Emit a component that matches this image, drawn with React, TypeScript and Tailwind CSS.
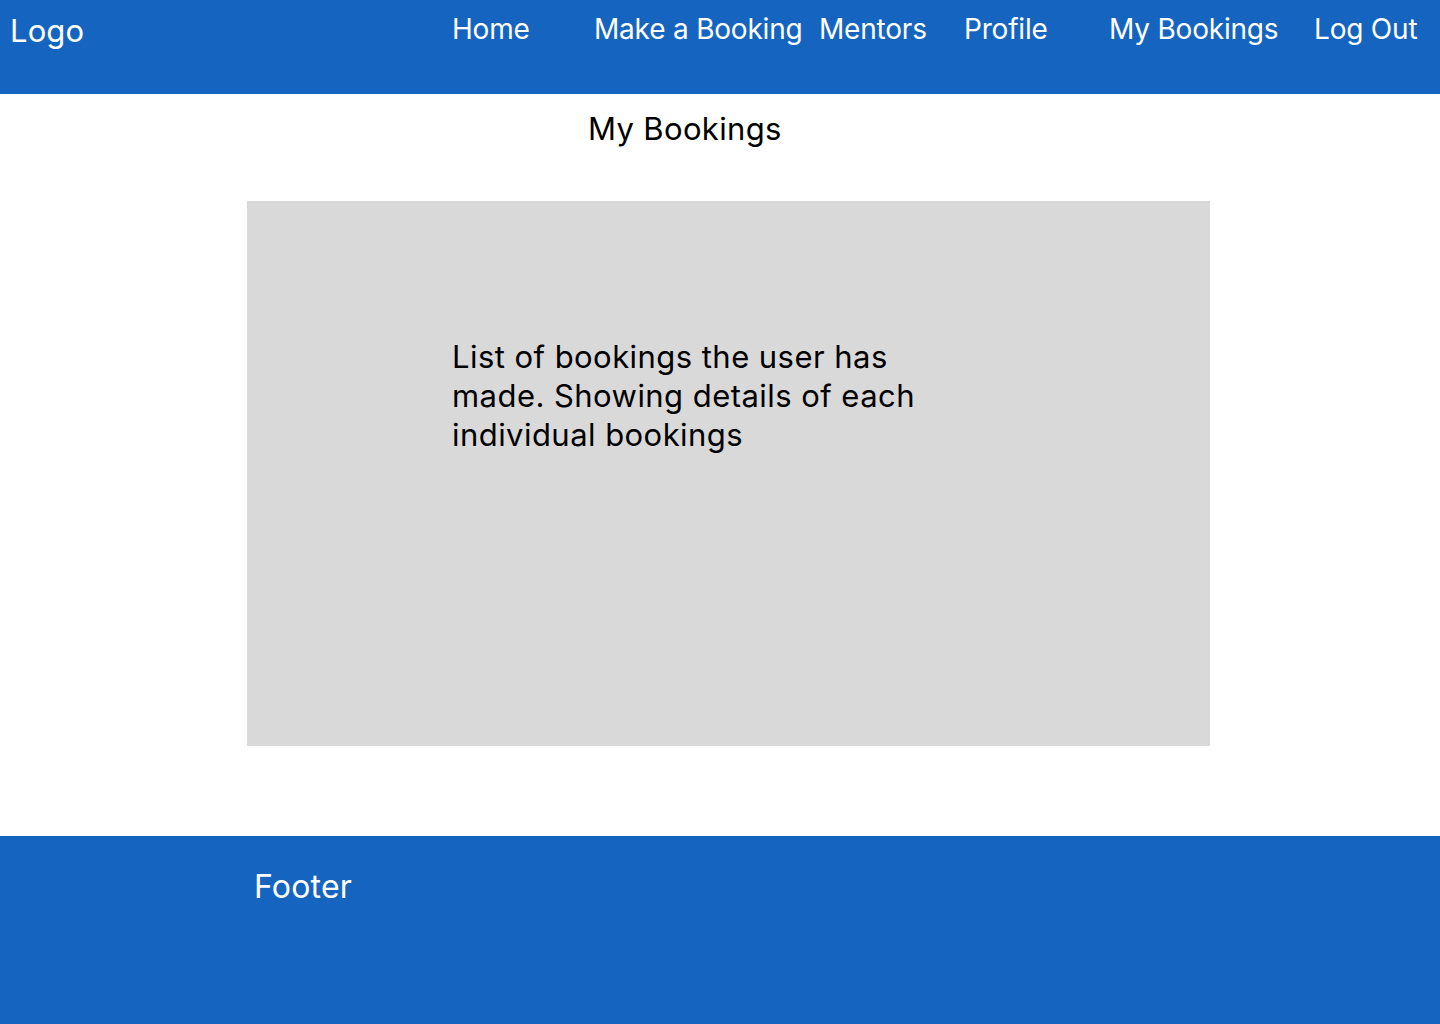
export default function App() {
  const font = { fontFamily: "Inter, 'Noto Sans', sans-serif" };
  return (
    <div style={font} className="w-[1440px] h-[1024px] bg-white flex flex-col">
      <header className="h-[94px] bg-[#1565c0] text-white shrink-0 flex items-start pl-[10px] pt-[12px]">
        <div className="w-[442px] text-[31px] leading-[38px] tracking-[0.1px]">Logo</div>
        <nav className="flex text-[28px] leading-[34px] tracking-[-0.2px] whitespace-nowrap">
          <span className="w-[142px]">Home</span>
          <span className="w-[225px]">Make a Booking</span>
          <span className="w-[145px]">Mentors</span>
          <span className="w-[145px]">Profile</span>
          <span className="w-[205px]">My Bookings</span>
          <span>Log Out</span>
        </nav>
      </header>
      <main className="flex-1 flex flex-col">
        <h1 className="pl-[588px] pt-[16px] text-[31px] leading-[38px] tracking-[0.35px] text-black font-normal">My Bookings</h1>
        <div className="ml-[247px] mt-[53px] w-[963px] h-[545px] bg-[#d9d9d9] pt-[136px] pl-[205px]">
          <p className="w-[500px] text-[31px] leading-[39px] tracking-[0.45px] text-black">
            List of bookings the user has made. Showing details of each individual bookings
          </p>
        </div>
      </main>
      <footer className="h-[188px] bg-[#1565c0] text-white shrink-0 pl-[254px] pt-[31px]">
        <div className="text-[32px] leading-[40px] tracking-[0.2px]">Footer</div>
      </footer>
    </div>
  );
}
